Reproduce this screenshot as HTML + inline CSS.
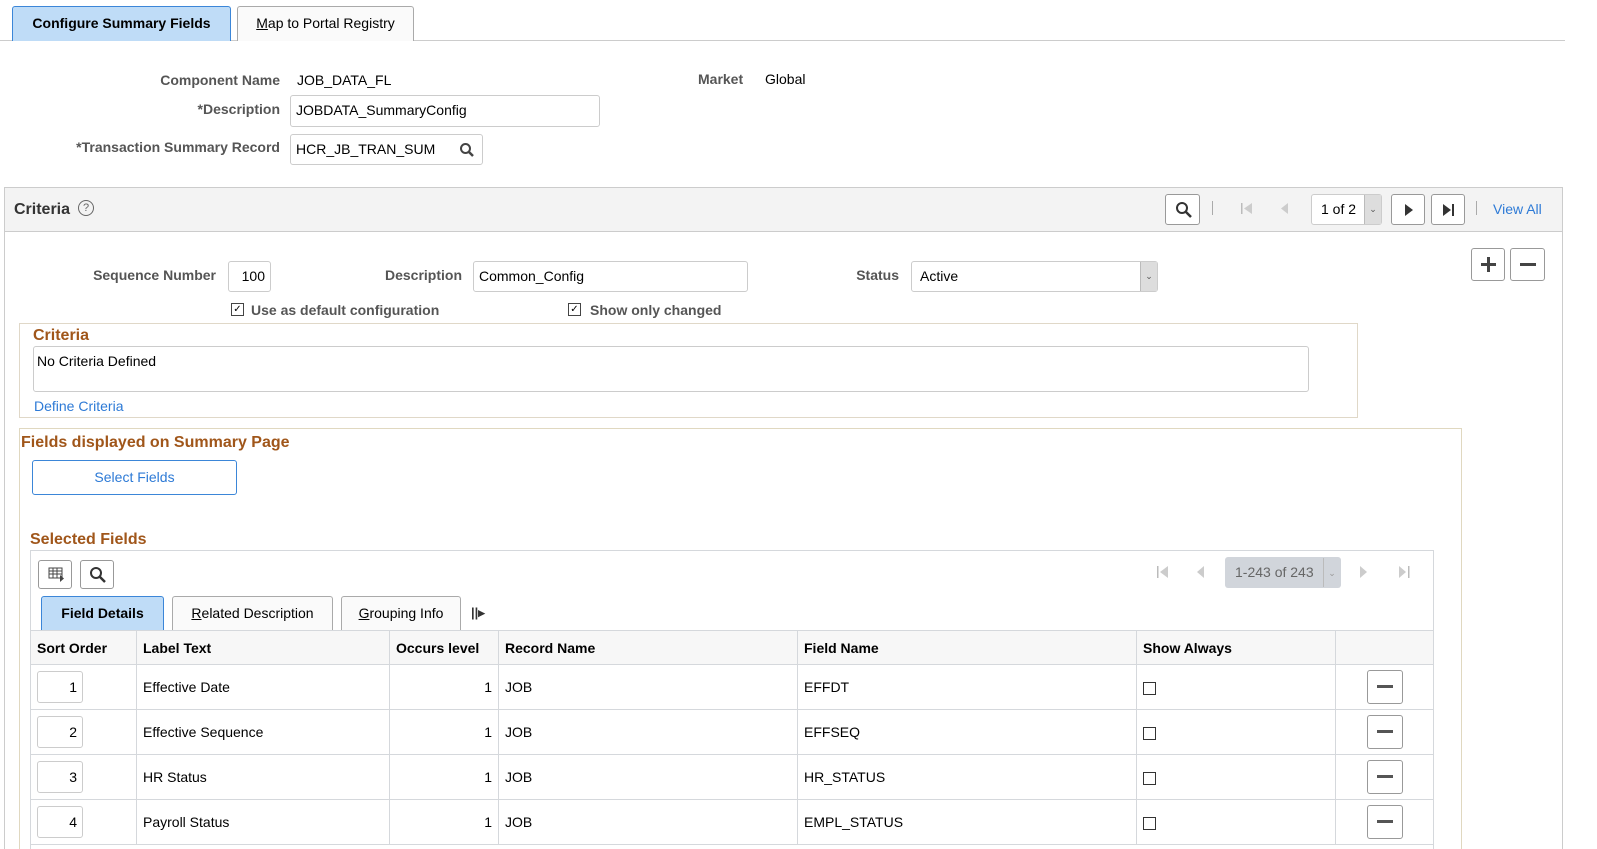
<!DOCTYPE html><html><head><style>
html,body{margin:0;width:1597px;height:849px;overflow:hidden}
body{background:#fff;font-family:"Liberation Sans",Arial,sans-serif;font-size:14px;color:#000;position:relative}
.a{position:absolute}
.lbl{position:absolute;font-weight:bold;color:#555;text-align:right;white-space:nowrap}
.inp{position:absolute;border:1px solid #ccc;border-radius:3px;background:#fff;box-sizing:border-box;padding-left:5px;line-height:28px}
.btn{position:absolute;border:1px solid #999;border-radius:3px;background:#fff;box-sizing:border-box}
.h{position:absolute;color:#a0561a;font-weight:bold;font-size:16px}
.tab{position:absolute;border:1px solid #aaa;border-bottom:none;border-radius:3px 3px 0 0;background:#fafafa;box-sizing:border-box;text-align:center;line-height:32px;font-size:14px}
.tab.on{background:#bfdcf7;border-color:#3b86d8;font-weight:bold}
table{border-collapse:collapse;position:absolute;left:30px;top:630px}
td,th{border:1px solid #d5d8dc;padding:0 6px;text-align:left;font-size:14px;vertical-align:middle}
th{height:33px;background:#f7f7f7}
td{height:44px}
.so{display:inline-block;width:46px;height:32px;border:1px solid #ccc;border-radius:3px;text-align:right;box-sizing:border-box;padding-right:5px;line-height:30px}
.cb{display:inline-block;width:11px;height:11px;border:1px solid #333;vertical-align:middle}
.mb{display:inline-block;width:34px;height:32px;border:1px solid #999;border-radius:3px;position:relative;vertical-align:middle}
.mb:after{content:"";position:absolute;left:9px;top:14px;width:16px;height:3px;background:#555}
</style></head><body>
<div class="a" style="left:0;top:40px;width:1565px;border-top:1px solid #ccc"></div>
<div class="tab on" style="left:12px;top:6px;width:219px;height:35px">Configure Summary Fields</div>
<div class="tab" style="left:237px;top:6px;width:177px;height:35px"><u>M</u>ap to Portal Registry</div>

<div class="lbl" style="right:1317px;top:72px">Component Name</div>
<div class="a" style="left:297px;top:72px">JOB_DATA_FL</div>
<div class="lbl" style="right:1317px;top:101px">*Description</div>
<div class="inp" style="left:290px;top:95px;width:310px;height:32px">JOBDATA_SummaryConfig</div>
<div class="lbl" style="right:1317px;top:139px">*Transaction Summary Record</div>
<div class="inp" style="left:290px;top:134px;width:193px;height:31px">HCR_JB_TRAN_SUM
<svg class="a" style="left:168px;top:7px" width="16" height="16"><circle cx="6.5" cy="6.5" r="4.5" fill="none" stroke="#444" stroke-width="2"/><path d="M10 10l4 4" stroke="#444" stroke-width="2.5"/></svg></div>
<div class="lbl" style="left:698px;top:71px">Market</div>
<div class="a" style="left:765px;top:71px">Global</div>

<div class="a" style="left:4px;top:187px;width:1559px;height:680px;border:1px solid #ccc;box-sizing:border-box"></div>
<div class="a" style="left:5px;top:188px;width:1557px;height:43px;background:#f3f3f3;border-bottom:1px solid #ccc"></div>
<div class="a" style="left:14px;top:201px;font-weight:bold;font-size:16px;color:#333">Criteria</div>
<div class="a" style="left:78px;top:200px;width:14px;height:14px;border:1px solid #666;border-radius:50%;font-size:11px;text-align:center;line-height:14px;color:#666">?</div>
<div class="btn" style="left:1165px;top:194px;width:35px;height:31px"><svg class="a" style="left:9px;top:6px" width="18" height="18"><circle cx="7" cy="7" r="5" fill="none" stroke="#333" stroke-width="2"/><path d="M11 11l5 5" stroke="#333" stroke-width="2.5"/></svg></div>
<div class="a" style="left:1212px;top:201px;width:1px;height:14px;background:#aaa"></div>
<svg class="a" style="left:1240px;top:202px" width="14" height="14"><rect x="1" y="1" width="1.5" height="11" fill="#bbb"/><path d="M12 1v11L4 6.5z" fill="#ccc"/></svg>
<svg class="a" style="left:1280px;top:202px" width="10" height="14"><path d="M8 1v11L1 6.5z" fill="#ccc"/></svg>
<div class="inp" style="left:1311px;top:194px;width:71px;height:31px;padding-left:9px">1 of 2<div class="a" style="right:0;top:0;width:16px;height:29px;background:#ddd;border-left:1px solid #bbb;font-size:9px;text-align:center;color:#555">&#8964;</div></div>
<div class="btn" style="left:1391px;top:194px;width:34px;height:31px"><svg class="a" style="left:12px;top:8px" width="10" height="14"><path d="M1 1v12l8-6z" fill="#333"/></svg></div>
<div class="btn" style="left:1431px;top:194px;width:34px;height:31px"><svg class="a" style="left:10px;top:8px" width="14" height="14"><path d="M1 1v12l8-6z" fill="#333"/><rect x="10" y="1" width="2" height="12" fill="#333"/></svg></div>
<div class="a" style="left:1476px;top:201px;width:1px;height:14px;background:#aaa"></div>
<div class="a" style="left:1493px;top:201px;color:#2d7ad6">View All</div>
<div class="btn" style="left:1471px;top:248px;width:34px;height:33px"><div class="a" style="left:9px;top:14px;width:15px;height:3px;background:#444"></div><div class="a" style="left:15px;top:8px;width:3px;height:15px;background:#444"></div></div>
<div class="btn" style="left:1510px;top:248px;width:35px;height:33px"><div class="a" style="left:9px;top:14px;width:16px;height:3px;background:#444"></div></div>

<div class="lbl" style="right:1381px;top:267px">Sequence Number</div>
<div class="inp" style="left:228px;top:261px;width:43px;height:31px;text-align:right;padding-right:5px">100</div>
<div class="lbl" style="right:1135px;top:267px">Description</div>
<div class="inp" style="left:473px;top:261px;width:275px;height:31px">Common_Config</div>
<div class="lbl" style="right:698px;top:267px">Status</div>
<div class="inp" style="left:911px;top:261px;width:247px;height:31px;padding-left:8px">Active<div class="a" style="right:0;top:0;width:16px;height:29px;background:#ddd;border-left:1px solid #bbb;font-size:9px;text-align:center;color:#555">&#8964;</div></div>
<div class="a" style="left:231px;top:303px;width:11px;height:11px;border:1px solid #444;font-size:10px;line-height:11px;text-align:center">&#10003;</div>
<div class="lbl" style="left:251px;top:302px">Use as default configuration</div>
<div class="a" style="left:568px;top:303px;width:11px;height:11px;border:1px solid #444;font-size:10px;line-height:11px;text-align:center">&#10003;</div>
<div class="lbl" style="left:590px;top:302px">Show only changed</div>

<div class="a" style="left:19px;top:323px;width:1339px;height:95px;border:1px solid #e0d8c8;box-sizing:border-box"></div>
<div class="h" style="left:33px;top:327px">Criteria</div>
<div class="a" style="left:33px;top:346px;width:1276px;height:46px;border:1px solid #ccc;border-radius:3px;box-sizing:border-box;padding:6px 3px">No Criteria Defined</div>
<div class="a" style="left:34px;top:398px;color:#2d7ad6">Define Criteria</div>

<div class="a" style="left:19px;top:428px;width:1443px;height:440px;border:1px solid #e0d8c0;box-sizing:border-box"></div>
<div class="h" style="left:21px;top:434px">Fields displayed on Summary Page</div>
<div class="a" style="left:32px;top:460px;width:205px;height:35px;border:1px solid #3b86d8;border-radius:3px;box-sizing:border-box;text-align:center;line-height:33px;color:#2d7ad6">Select Fields</div>
<div class="h" style="left:30px;top:531px">Selected Fields</div>

<div class="a" style="left:30px;top:550px;width:1404px;height:320px;border:1px solid #d5d8dc;box-sizing:border-box"></div>
<div class="btn" style="left:38px;top:560px;width:34px;height:29px"><svg class="a" style="left:9px;top:6px" width="18" height="16"><rect x="1" y="1" width="13" height="10" fill="none" stroke="#444"/><path d="M1 4h13M1 7h13M5 1v10M9 1v10" stroke="#444"/><path d="M12 8v7l4-3.5z" fill="#444"/></svg></div>
<div class="btn" style="left:80px;top:560px;width:34px;height:29px"><svg class="a" style="left:8px;top:5px" width="18" height="18"><circle cx="7" cy="7" r="5" fill="none" stroke="#333" stroke-width="2"/><path d="M11 11l5 5" stroke="#333" stroke-width="2.5"/></svg></div>
<svg class="a" style="left:1156px;top:565px" width="14" height="14"><rect x="1" y="1" width="1.5" height="12" fill="#bbb"/><path d="M12 1v12L4 7z" fill="#ccc"/></svg>
<svg class="a" style="left:1196px;top:565px" width="10" height="14"><path d="M8 1v12L1 7z" fill="#ccc"/></svg>
<div class="a" style="left:1225px;top:557px;width:116px;height:31px;background:#d1d5db;border-radius:3px;color:#666;line-height:31px;padding-left:10px;box-sizing:border-box">1-243 of 243<div class="a" style="right:1px;top:1px;width:16px;height:29px;border-left:1px solid #bbb;font-size:9px;text-align:center;color:#999">&#8964;</div></div>
<svg class="a" style="left:1359px;top:565px" width="10" height="14"><path d="M1 1v12l7-6z" fill="#ccc"/></svg>
<svg class="a" style="left:1398px;top:565px" width="14" height="14"><path d="M1 1v12l7-6z" fill="#ccc"/><rect x="10" y="1" width="1.5" height="12" fill="#bbb"/></svg>

<div class="tab on" style="left:41px;top:596px;width:123px;height:35px">Field Details</div>
<div class="tab" style="left:172px;top:596px;width:161px;height:35px"><u>R</u>elated Description</div>
<div class="tab" style="left:341px;top:596px;width:120px;height:35px"><u>G</u>rouping Info</div>
<div class="a" style="left:471px;top:605px;font-size:13px;color:#333;font-weight:bold">||&#9656;</div>

<table>
<tr><th style="width:93px">Sort Order</th><th style="width:240px">Label Text</th><th style="width:96px">Occurs level</th><th style="width:286px">Record Name</th><th style="width:326px">Field Name</th><th style="width:186px">Show Always</th><th style="width:85px"></th></tr>
<tr><td><span class="so">1</span></td><td>Effective Date</td><td style="text-align:right">1</td><td>JOB</td><td>EFFDT</td><td><span class="cb"></span></td><td style="text-align:center"><span class="mb"></span></td></tr>
<tr><td><span class="so">2</span></td><td>Effective Sequence</td><td style="text-align:right">1</td><td>JOB</td><td>EFFSEQ</td><td><span class="cb"></span></td><td style="text-align:center"><span class="mb"></span></td></tr>
<tr><td><span class="so">3</span></td><td>HR Status</td><td style="text-align:right">1</td><td>JOB</td><td>HR_STATUS</td><td><span class="cb"></span></td><td style="text-align:center"><span class="mb"></span></td></tr>
<tr><td><span class="so">4</span></td><td>Payroll Status</td><td style="text-align:right">1</td><td>JOB</td><td>EMPL_STATUS</td><td><span class="cb"></span></td><td style="text-align:center"><span class="mb"></span></td></tr>
</table>
</body></html>
